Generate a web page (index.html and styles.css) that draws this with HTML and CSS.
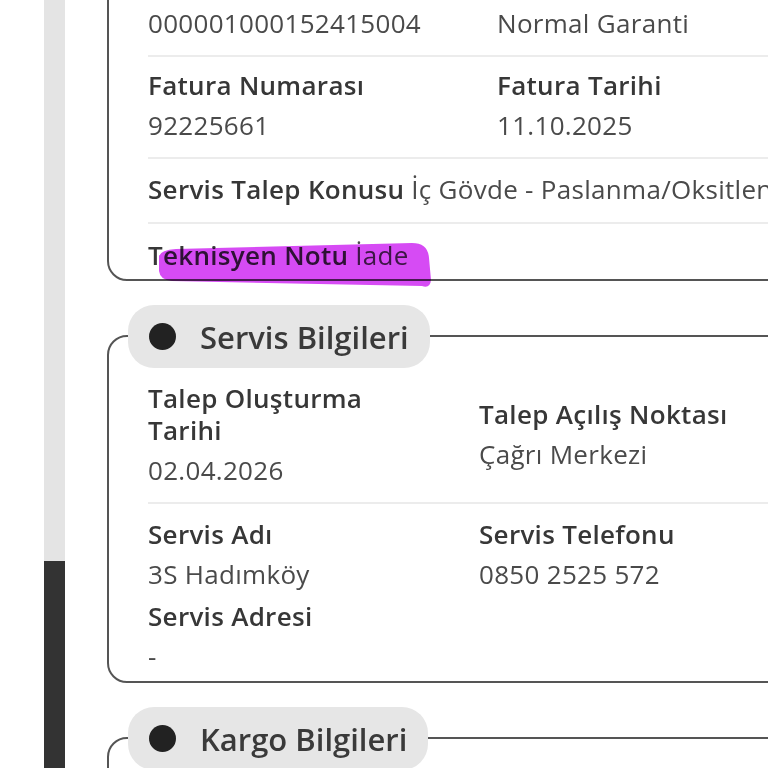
FILE: index.html
```html
<!DOCTYPE html>
<html lang="tr">
<head>
<meta charset="utf-8">
<title>Servis Detayı</title>
<link rel="stylesheet" href="styles.css">
</head>
<body>
<div class="page">
  <div class="rail"><div class="rail-space"></div><div class="rail-thumb"></div></div>
  <main class="content">
    <section class="card card-first">
      <div class="row grid grid-wide">
        <div class="cell"><div class="value">000001000152415004</div></div>
        <div class="cell"><div class="value">Normal Garanti</div></div>
      </div>
      <div class="row grid grid-wide">
        <div class="cell"><div class="label">Fatura Numarası</div><div class="value">92225661</div></div>
        <div class="cell"><div class="label">Fatura Tarihi</div><div class="value">11.10.2025</div></div>
      </div>
      <div class="row row-inline">
        <div class="inline"><span class="label">Servis Talep Konusu</span> <span class="value">İç Gövde - Paslanma/Oksitlenme</span></div>
      </div>
      <div class="row row-inline row-last">
        <div class="inline note"><span class="label">Teknisyen Notu</span> <span class="value">İade</span>
          <svg class="scribble" width="290" height="52" viewBox="0 0 290 52" aria-hidden="true"><path d="M9,16 Q11,10 26,9 L262,3 Q278,3 279,18 L281,40 Q280,49 272,46 L22,41 Q10,40 9,31 Z"/></svg>
        </div>
      </div>
    </section>

    <section class="card">
      <div class="pill"><span class="dot"></span><span class="pill-title">Servis Bilgileri</span></div>
      <div class="row grid grid-narrow center">
        <div class="cell"><div class="label wrap">Talep Oluşturma Tarihi</div><div class="value">02.04.2026</div></div>
        <div class="cell"><div class="label">Talep Açılış Noktası</div><div class="value">Çağrı Merkezi</div></div>
      </div>
      <div class="row row-last grid grid-narrow">
        <div class="cell">
          <div class="label">Servis Adı</div><div class="value">3S Hadımköy</div>
          <div class="label spaced">Servis Adresi</div><div class="value">-</div>
        </div>
        <div class="cell"><div class="label">Servis Telefonu</div><div class="value">0850 2525 572</div></div>
      </div>
    </section>

    <section class="card">
      <div class="pill"><span class="dot"></span><span class="pill-title">Kargo Bilgileri</span></div>
      <div class="row"><div class="label">Kargo Firması</div></div>
    </section>
  </main>
</div>
</body>
</html>
```

FILE: styles.css
```css
html, body {
  margin: 0;
  padding: 0;
  background: #ffffff;
}
body {
  width: 768px;
  height: 768px;
  overflow: hidden;
  font-family: "Open Sans", "Noto Sans", "Liberation Sans", sans-serif;
  color: #3a3a3a;
}
.page {
  display: flex;
  height: 768px;
}
.rail {
  margin-left: 44px;
  width: 21px;
  flex: 0 0 21px;
  height: 768px;
  background: #e4e4e4;
  display: flex;
  flex-direction: column;
}
.rail-space { flex: 1; }
.rail-thumb {
  height: 207px;
  background: #333333;
}
.content {
  margin-left: 42px;
  flex: 0 0 720px;
  width: 720px;
  display: flex;
  flex-direction: column;
  gap: 54px;
}
.card {
  border: 2px solid #555555;
  border-radius: 20px;
  padding: 0 0 0 39px;
  white-space: nowrap;
}
.card-first {
  margin-top: -60px;
  padding-top: 51px;
  padding-bottom: 0;
}
.row {
  padding: 14px 0 16px;
  border-bottom: 2px solid #ececec;
}
.card-first .row:first-child { padding-top: 14px; }
.card-first .row:nth-child(2) { padding-top: 12px; }
.row-inline { padding: 14px 0 17px; }
.row-last {
  border-bottom: none;
  padding-bottom: 9px;
}
.row-inline.row-last { padding: 15px 0 8px; }
.grid {
  display: grid;
}
.grid-wide { grid-template-columns: 349px 1fr; }
.grid-narrow { grid-template-columns: 331px 1fr; }
.center { align-items: center; }
.label {
  font-size: 26px;
  letter-spacing: 0.3px;
  font-weight: 600;
  line-height: 32px;
  color: #373737;
}
.value {
  font-size: 26px;
  letter-spacing: 0.3px;
  font-weight: 400;
  line-height: 32px;
  color: #4a4a4a;
  margin-top: 8px;
}
.card-first .row:first-child .value { margin-top: 0; }
.inline {
  font-size: 26px;
  line-height: 32px;
}
.inline .value { margin-top: 0; }
.wrap {
  white-space: normal;
  max-width: 250px;
}
.spaced { margin-top: 10px; }
.note { position: relative; }
.scribble {
  position: absolute;
  left: 2px;
  top: 1px;
  mix-blend-mode: multiply;
}
.scribble path { fill: #d23cf3; opacity: 0.92; }
.pill {
  width: fit-content;
  margin: -32px 0 0 -20px;
  height: 63px;
  box-sizing: border-box;
  padding: 0 21px;
  display: flex;
  align-items: center;
  gap: 24px;
  background: #e6e6e6;
  border-radius: 26px;
}
.dot {
  width: 27px;
  height: 27px;
  border-radius: 50%;
  background: #222222;
}
.pill-title {
  font-size: 31px;
  letter-spacing: 0;
  font-weight: 600;
  color: #3a3a3a;
}
```
